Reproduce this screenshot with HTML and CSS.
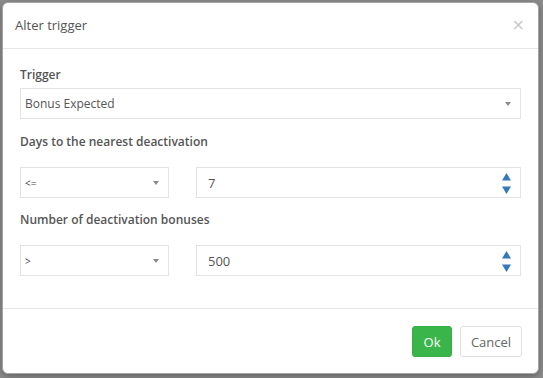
FILE: index.html
```html
<!DOCTYPE html>
<html>
<head>
<meta charset="utf-8">
<link rel="stylesheet" href="styles.css">
</head>
<body>
<div class="modal">
  <div class="modal-header">
    <span class="modal-title">Alter trigger</span>
    <span class="close">&times;</span>
  </div>
  <div class="modal-body">
    <div class="label first">Trigger</div>
    <div class="select wide"><span class="val">Bonus Expected</span><span class="caret"></span></div>

    <div class="label">Days to the nearest deactivation</div>
    <div class="row">
      <div class="select"><span class="val op">&lt;=</span><span class="caret"></span></div>
      <div class="number"><span class="num">7</span>
        <svg class="spin" width="9" height="21" viewBox="0 0 9 21"><polygon points="4.5,0 9,7.5 0,7.5"/><polygon points="0,13.5 9,13.5 4.5,21"/></svg>
      </div>
    </div>

    <div class="label">Number of deactivation bonuses</div>
    <div class="row">
      <div class="select"><span class="val op">&gt;</span><span class="caret"></span></div>
      <div class="number"><span class="num">500</span>
        <svg class="spin" width="9" height="21" viewBox="0 0 9 21"><polygon points="4.5,0 9,7.5 0,7.5"/><polygon points="0,13.5 9,13.5 4.5,21"/></svg>
      </div>
    </div>
  </div>
  <div class="modal-footer">
    <button class="btn ok">Ok</button>
    <button class="btn cancel">Cancel</button>
  </div>
</div>
</body>
</html>
```

FILE: styles.css
```css
html, body {
  margin: 0;
  padding: 0;
}
body {
  width: 543px;
  height: 378px;
  background: #8b8b8b;
  font-family: "Open Sans", "DejaVu Sans", sans-serif;
  color: #555;
  overflow: hidden;
}
.modal {
  box-sizing: border-box;
  margin: 2px 0 0 2px;
  width: 537px;
  height: 372px;
  background: #fff;
  border: 1px solid #a5a5a5;
  border-radius: 6px;
  box-shadow: 0 2px 6px rgba(0,0,0,0.3);
  display: flex;
  flex-direction: column;
}
.modal-header {
  height: 46px;
  box-sizing: border-box;
  border-bottom: 1px solid #e5e5e5;
  padding: 13px 13px 0 12px;
  display: flex;
  justify-content: space-between;
  align-items: flex-start;
}
.modal-title {
  font-size: 13px;
  line-height: 18px;
  color: #555;
}
.close {
  font-size: 16px;
  line-height: 18px;
  color: #c8c8c8;
  font-family: "DejaVu Sans", sans-serif;
}
.modal-body {
  flex: 1;
  padding: 17px 17px 0 17px;
}
.label {
  font-size: 12px;
  font-weight: 600;
  line-height: 18px;
  color: #555;
  margin-top: 14px;
}
.label.first {
  margin-top: 0;
}
.select, .number {
  box-sizing: border-box;
  height: 31px;
  border: 1px solid #e3e3e3;
  background: #fff;
  display: flex;
  align-items: center;
  justify-content: space-between;
}
.select {
  padding: 0 9px 0 4px;
}
.select.wide {
  margin-top: 4px;
}
.val {
  font-size: 12px;
  color: #555;
}
.val.op {
  font-size: 10px;
  color: #444;
}
.caret {
  width: 0;
  height: 0;
  border-left: 3px solid transparent;
  border-right: 3px solid transparent;
  border-top: 4px solid #8a8a8a;
  margin-top: 1px;
}
.row {
  display: grid;
  grid-template-columns: 149px 1fr;
  column-gap: 27px;
  margin-top: 16px;
}
.row + .label {
  margin-top: 13px;
}
.number {
  padding: 0 9px 0 11px;
}
.num {
  font-size: 13px;
  color: #555;
}
.spin {
  fill: #3579bd;
  display: block;
  margin-top: 1px;
}
.modal-footer {
  height: 65px;
  box-sizing: border-box;
  border-top: 1px solid #e5e5e5;
  padding: 17px 16px 0 0;
  display: flex;
  justify-content: flex-end;
  align-items: flex-start;
  gap: 8px;
}
.btn {
  box-sizing: border-box;
  height: 31px;
  font-family: "Open Sans", "DejaVu Sans", sans-serif;
  font-size: 13px;
  border-radius: 3px;
  padding: 0;
  cursor: pointer;
}
.btn.ok {
  width: 40px;
  background: #3ab54a;
  border: 1px solid #36ad45;
  color: #fff;
}
.btn.cancel {
  width: 62px;
  background: #fff;
  border: 1px solid #e0e0e0;
  color: #666;
}
```
